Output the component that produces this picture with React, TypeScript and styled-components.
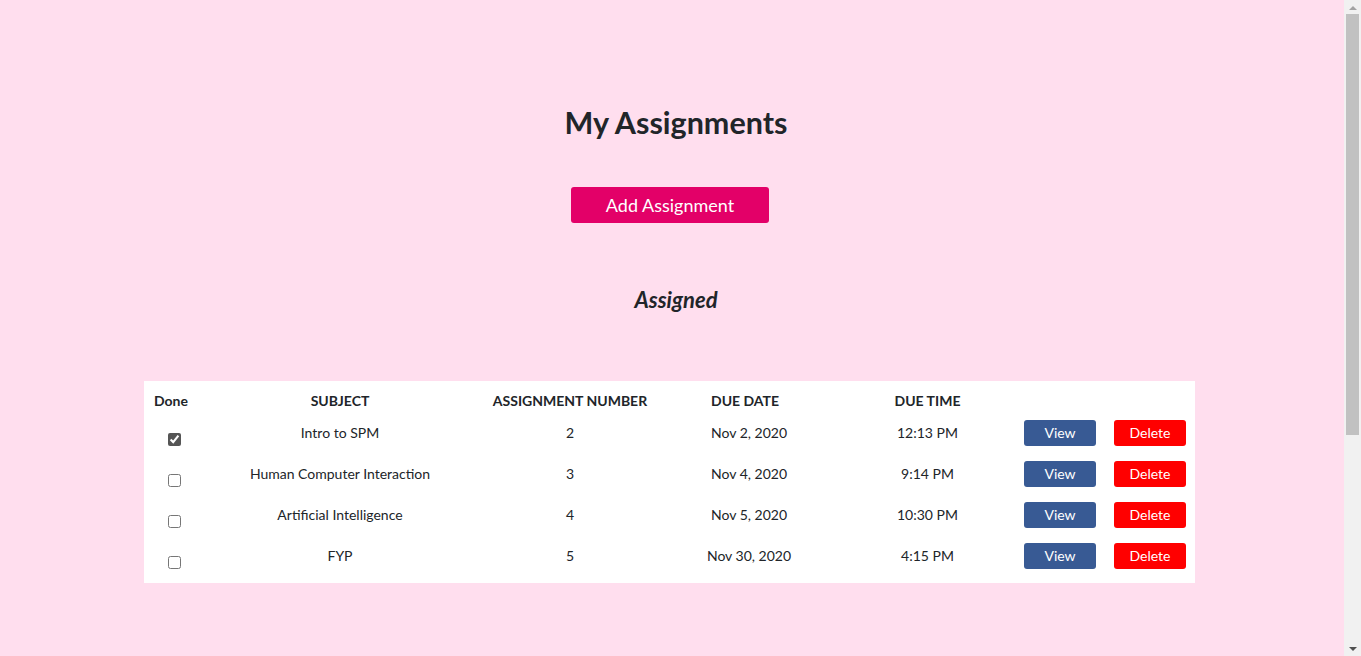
import React from 'react';
import styled, { createGlobalStyle } from 'styled-components';

const GlobalStyle = createGlobalStyle`
  html, body {
    margin: 0;
    padding: 0;
    background: #ffdeee;
  }
  body {
    font-family: Lato, "Open Sans", sans-serif;
    color: #212529;
  }
`;

type Assignment = {
  done: boolean;
  subject: string;
  number: number;
  date: string;
  time: string;
};

const assignments: Assignment[] = [
  { done: true, subject: 'Intro to SPM', number: 2, date: 'Nov 2, 2020', time: '12:13 PM' },
  { done: false, subject: 'Human Computer Interaction', number: 3, date: 'Nov 4, 2020', time: '9:14 PM' },
  { done: false, subject: 'Artificial Intelligence', number: 4, date: 'Nov 5, 2020', time: '10:30 PM' },
  { done: false, subject: 'FYP', number: 5, date: 'Nov 30, 2020', time: '4:15 PM' },
];

export default function App() {
  return (
    <>
      <GlobalStyle />
      <Page>
        <Title>My Assignments</Title>
        <AddButton>Add Assignment</AddButton>
        <Section>Assigned</Section>
        <Table>
          <HeadCell $pad="0 6px 0 0">Done</HeadCell>
          <HeadCell>SUBJECT</HeadCell>
          <HeadCell>ASSIGNMENT NUMBER</HeadCell>
          <HeadCell>DUE DATE</HeadCell>
          <HeadCell $pad="0 0 0 14px">DUE TIME</HeadCell>
          <HeadCell />
          <HeadCell />
          {assignments.map((a) => (
            <React.Fragment key={a.number}>
              <CheckCell>
                <Check type="checkbox" defaultChecked={a.done} />
              </CheckCell>
              <Cell>{a.subject}</Cell>
              <Cell>{a.number}</Cell>
              <Cell $pad="0 0 0 8px">{a.date}</Cell>
              <Cell $pad="0 0 0 14px">{a.time}</Cell>
              <Cell>
                <RowButton $kind="view">View</RowButton>
              </Cell>
              <Cell>
                <RowButton $kind="delete">Delete</RowButton>
              </Cell>
            </React.Fragment>
          ))}
        </Table>
      </Page>
      {/* the window's scrollbar, drawn since the headless page hides it */}
      <ScrollTrack>
        <Arrow $up />
        <Thumb />
        <Arrow />
      </ScrollTrack>
    </>
  );
}

const Page = styled.div`
  width: 1344px;
  min-height: 962px;
  display: flex;
  flex-direction: column;
  align-items: center;
  padding-top: 103px;
  box-sizing: border-box;
`;

const Title = styled.h1`
  margin: 0;
  font-size: 30.5px;
  font-weight: 700;
  line-height: 38px;
  padding-left: 8px;
`;

const AddButton = styled.button`
  margin: 46px 4px 0 0;
  width: 198px;
  height: 36px;
  border: none;
  border-radius: 3px;
  background: #e30068;
  color: #fff;
  font-family: inherit;
  font-size: 18px;
  cursor: pointer;
`;

const Section = styled.h3`
  margin: 63px 0 0;
  font-size: 22px;
  font-style: italic;
  font-weight: 700;
  line-height: 28px;
  padding-left: 8px;
`;

const Table = styled.div`
  margin-top: 67px;
  margin-right: 5px;
  width: 1051px;
  background: #fff;
  display: grid;
  grid-template-columns: 60px 272px 188px 162px 189px 90px 90px;
  grid-auto-rows: 41px;
  grid-template-rows: 24px;
  padding: 7px 0 7px;
  box-sizing: border-box;
`;

const HeadCell = styled.div<{ $pad?: string }>`
  display: flex;
  align-items: center;
  justify-content: center;
  font-size: 14px;
  font-weight: 700;
  color: #212529;
  padding: ${(p) => p.$pad ?? '0'};
`;

const Cell = styled.div<{ $pad?: string }>`
  display: flex;
  align-items: center;
  justify-content: center;
  font-size: 14px;
  color: #212529;
  padding: ${(p) => p.$pad ?? '0'};
`;

const CheckCell = styled.div`
  display: flex;
  justify-content: center;
  align-items: flex-start;
  padding-top: 21px;
`;

const Check = styled.input`
  width: 13px;
  height: 13px;
  margin: 0;
  accent-color: #555;
`;

const RowButton = styled.button<{ $kind: 'view' | 'delete' }>`
  width: 72px;
  height: 26px;
  border: none;
  border-radius: 3px;
  background: ${(p) => (p.$kind === 'view' ? '#385a94' : '#ff0000')};
  color: #fff;
  font-family: inherit;
  font-size: 14px;
  cursor: pointer;
`;

const ScrollTrack = styled.div`
  position: fixed;
  top: 0;
  right: 0;
  width: 17px;
  height: 100vh;
  background: #f1f1f1;
  display: flex;
  flex-direction: column;
  align-items: center;
`;

const Thumb = styled.div`
  width: 13px;
  height: 421px;
  margin-top: 4px;
  background: #c1c1c1;
  flex: none;
`;

const Arrow = styled.div<{ $up?: boolean }>`
  width: 0;
  height: 0;
  flex: none;
  border-left: 4px solid transparent;
  border-right: 4px solid transparent;
  ${(p) =>
    p.$up
      ? 'border-bottom: 4px solid #a3a3a3; margin-top: 6px;'
      : 'border-top: 4px solid #505050; margin-top: auto; margin-bottom: 5px;'}
`;
